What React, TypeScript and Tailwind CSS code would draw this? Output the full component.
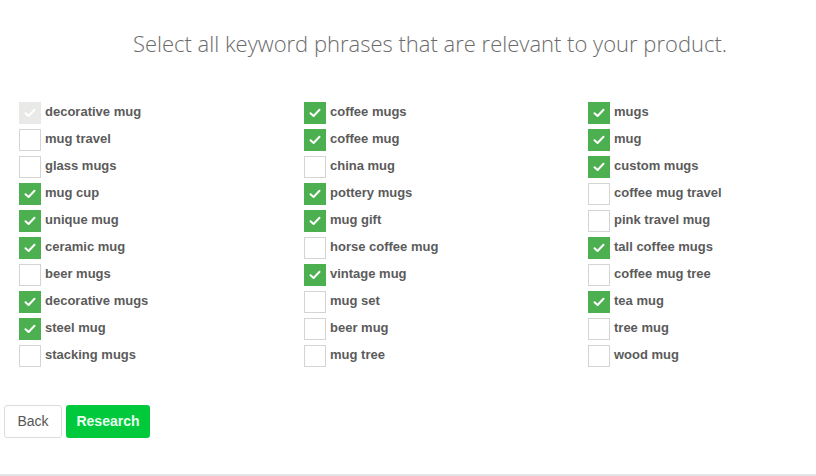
import React from "react";

type Item = { label: string; state: "on" | "off" | "dis" };

const cols: Item[][] = [
  [
    { label: "decorative mug", state: "dis" },
    { label: "mug travel", state: "off" },
    { label: "glass mugs", state: "off" },
    { label: "mug cup", state: "on" },
    { label: "unique mug", state: "on" },
    { label: "ceramic mug", state: "on" },
    { label: "beer mugs", state: "off" },
    { label: "decorative mugs", state: "on" },
    { label: "steel mug", state: "on" },
    { label: "stacking mugs", state: "off" },
  ],
  [
    { label: "coffee mugs", state: "on" },
    { label: "coffee mug", state: "on" },
    { label: "china mug", state: "off" },
    { label: "pottery mugs", state: "on" },
    { label: "mug gift", state: "on" },
    { label: "horse coffee mug", state: "off" },
    { label: "vintage mug", state: "on" },
    { label: "mug set", state: "off" },
    { label: "beer mug", state: "off" },
    { label: "mug tree", state: "off" },
  ],
  [
    { label: "mugs", state: "on" },
    { label: "mug", state: "on" },
    { label: "custom mugs", state: "on" },
    { label: "coffee mug travel", state: "off" },
    { label: "pink travel mug", state: "off" },
    { label: "tall coffee mugs", state: "on" },
    { label: "coffee mug tree", state: "off" },
    { label: "tea mug", state: "on" },
    { label: "tree mug", state: "off" },
    { label: "wood mug", state: "off" },
  ],
];

function Check({ state }: { state: Item["state"] }) {
  if (state === "off") {
    return <div className="w-[22px] h-[22px] border border-[#d4d4d4] bg-white shrink-0" />;
  }
  const bg = state === "on" ? "bg-[#4caf50]" : "bg-[#e9e9e7]";
  return (
    <div className={`w-[22px] h-[22px] ${bg} shrink-0 flex items-center justify-center`}>
      <svg width="12" height="10" viewBox="0 0 12 10" fill="none">
        <path d="M1.5 5.2 L4.6 8 L10.5 1.8" stroke="white" strokeWidth="2" strokeLinecap="round" strokeLinejoin="round" />
      </svg>
    </div>
  );
}

export default function App() {
  return (
    <div className="w-[816px] h-[476px] bg-white relative overflow-hidden" style={{ fontFamily: '"Liberation Sans", Arial, sans-serif' }}>
      <div className="w-[860px] pt-[29px] text-center text-[22px] font-light text-[#6b6b6b] leading-[28px]" style={{ fontFamily: '"Open Sans", "Liberation Sans", sans-serif', fontWeight: 300 }}>
        Select all keyword phrases that are relevant to your product.
      </div>
      <div className="flex pl-[19px] pt-[45px]">
        {cols.map((col, ci) => (
          <div key={ci} className={ci === 0 ? "w-[285px]" : ci === 1 ? "w-[284px]" : "w-[220px]"}>
            <div className="flex flex-col gap-[5px]">
              {col.map((it) => (
                <div key={it.label} className="flex items-center h-[22px]">
                  <Check state={it.state} />
                  <span className="ml-[4px] text-[13px] font-bold text-[#5b5b5b] leading-[22px] -mt-[2px]">{it.label}</span>
                </div>
              ))}
            </div>
          </div>
        ))}
      </div>
      <div className="flex gap-[4px] pl-[4px] pt-[38px]">
        <button className="w-[58px] h-[33px] border border-[#dcdcdc] rounded-[3px] bg-white text-[14px] text-[#555]">Back</button>
        <button className="w-[84px] h-[33px] rounded-[3px] bg-[#00c93c] text-[14px] font-bold text-[#e8fff0]">Research</button>
      </div>
      <div className="absolute left-0 right-0 bottom-0 h-[2px] bg-[#e3e6e8]" />
    </div>
  );
}
